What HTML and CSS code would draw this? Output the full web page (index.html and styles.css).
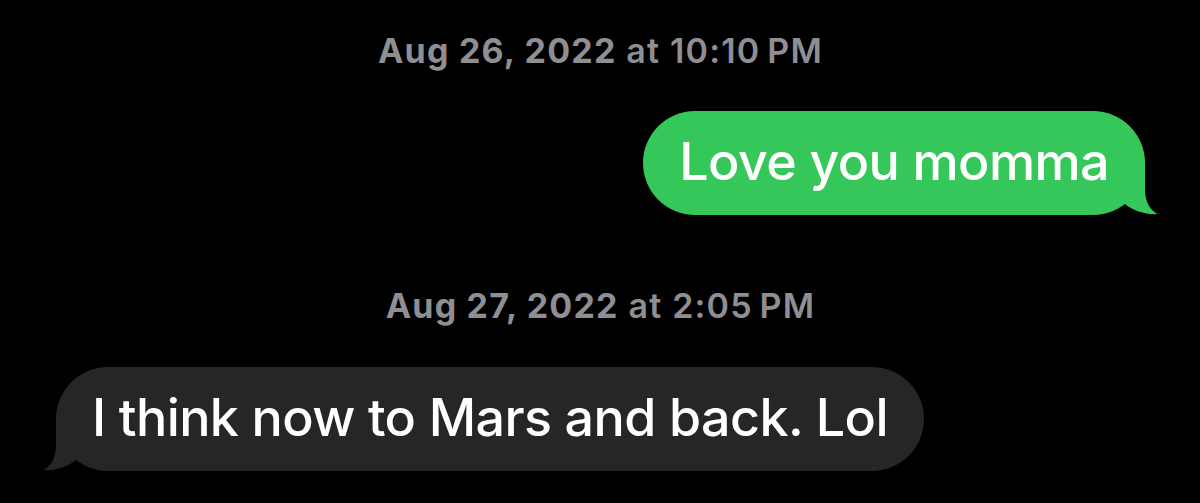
FILE: index.html
```html
<!DOCTYPE html>
<html>
<head>
<meta charset="utf-8">
<link rel="stylesheet" href="styles.css">
</head>
<body>
<main class="thread">
  <div class="stamp stamp-first"><b>Aug 26, 2022</b> at 10:10&#8201;PM</div>
  <div class="row row-sent">
    <div class="bubble sent">Love you momma
      <svg class="tail tail-sent" viewBox="0 0 40 52" width="40" height="52"><path d="M26,0 L26,26 C26,40 32,48 39,51 C28,52 14,48 6,41 L0,40 L0,0 Z" fill="#35c759"/></svg>
    </div>
  </div>
  <div class="stamp stamp-second"><b>Aug 27, 2022</b> at 2:05&#8201;PM</div>
  <div class="row row-received">
    <div class="bubble received">I think now to Mars and back. Lol
      <svg class="tail tail-received" viewBox="0 0 40 52" width="40" height="52"><path d="M14,0 L14,26 C14,40 8,48 1,51 C12,52 26,48 34,41 L40,40 L40,0 Z" fill="#262628"/></svg>
    </div>
  </div>
</main>
</body>
</html>
```

FILE: styles.css
```css
html, body {
  margin: 0;
  padding: 0;
  background: #000;
}

body {
  font-family: Inter, "Liberation Sans", sans-serif;
  width: 1200px;
  height: 503px;
  overflow: hidden;
}

.thread {
  display: flex;
  flex-direction: column;
  padding: 31px 55px 0 56px;
}

.stamp {
  text-align: center;
  color: #8e8e93;
  font-size: 34px;
  line-height: 40px;
  font-weight: 600;
  letter-spacing: 1.2px;
}

.stamp b {
  font-weight: 700;
}

.stamp-second {
  margin-top: 71px;
}

.row {
  display: flex;
}

.row-sent {
  justify-content: flex-end;
  margin-top: 40px;
}

.row-received {
  justify-content: flex-start;
  margin-top: 41px;
}

.bubble {
  position: relative;
  font-size: 52px;
  line-height: 60px;
  font-weight: 500;
  color: #fff;
  padding: 21px 36px 23px 36px;
  border-radius: 52px;
  letter-spacing: -0.6px;
}

.sent {
  background: #35c759;
}

.received {
  background: #262628;
}

.tail {
  position: absolute;
  bottom: 0;
  display: block;
}

.tail-sent {
  right: -14px;
}

.tail-received {
  left: -14px;
}
```
